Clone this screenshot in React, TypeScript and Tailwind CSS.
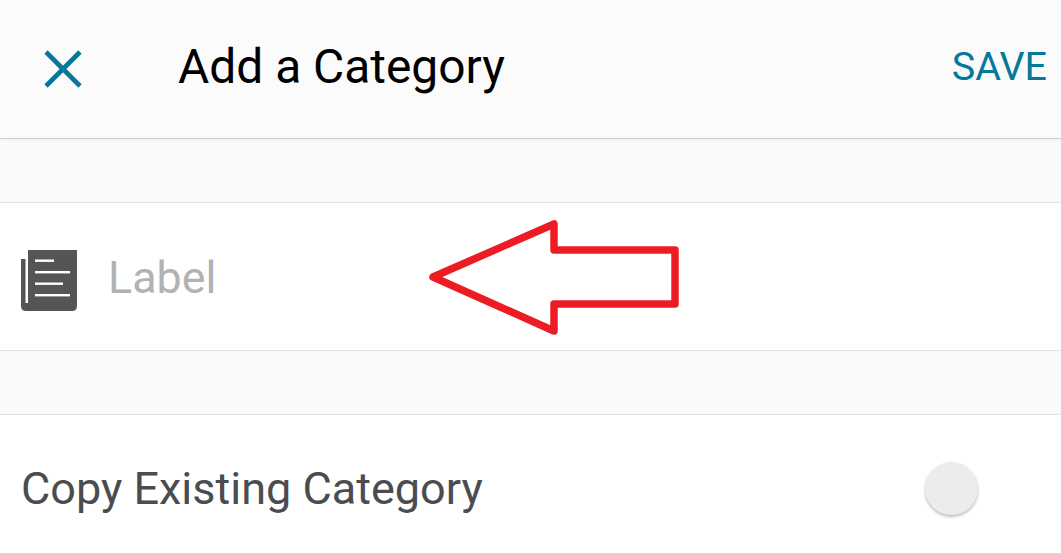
import React from 'react';

const font = { fontFamily: 'Roboto, sans-serif' };

const CloseIcon = () => (
  <svg width="38" height="38" viewBox="0 0 38 38" className="shrink-0">
    <path d="M2 2L36 36M36 2L2 36" stroke="#05799b" strokeWidth="4.6" fill="none" />
  </svg>
);

const BookIcon = () => (
  <svg width="56" height="61" viewBox="0 0 56 61" className="shrink-0 mt-[8px]">
    <path d="M7 0H56V56Q56 61 51 61H5Q0 61 0 56V9H4.5V53H7Z" fill="#555555" />
    <rect x="14" y="9.5" width="19" height="2.4" fill="#fff" />
    <rect x="14" y="21" width="35" height="2.4" fill="#fff" />
    <rect x="14" y="32.5" width="28" height="2.4" fill="#fff" />
    <rect x="14" y="44" width="35" height="2.4" fill="#fff" />
  </svg>
);

const Arrow = () => (
  <svg width="262" height="124" viewBox="0 0 262 124" className="absolute left-[426px] top-[215px]">
    <path
      d="M7 62L128 9V35H249V89H128V116Z"
      fill="none"
      stroke="#ed1c24"
      strokeWidth="7.5"
      strokeLinejoin="round"
    />
  </svg>
);

export default function App() {
  return (
    <div className="relative w-[1061px] h-[553px] overflow-hidden bg-[#fafafa]" style={font}>
      <header className="h-[139px] flex items-center bg-[#fbfbfb] border-b border-[#cfcfcf] shadow-[0_1px_3px_rgba(0,0,0,0.06)] pl-[44px] pr-[14px]">
        <CloseIcon />
        <h1 className="ml-[96px] text-[47.9px] leading-none text-black pb-[3px]">Add a Category</h1>
        <button className="ml-auto text-[39.5px] leading-none text-[#05799b] pb-[5px]">SAVE</button>
      </header>

      <div className="mt-[63px] h-[149px] flex items-center bg-white border-y border-[#e2e2e2] pl-[21px]">
        <BookIcon />
        <span className="ml-[31px] mt-[3px] text-[44.8px] leading-none text-[#b0b2b4]">Label</span>
      </div>

      <div className="mt-[63px] h-[139px] flex items-start bg-white border-t border-[#e2e2e2] pl-[21px] pr-[83px]">
        <span className="mt-[51px] text-[45px] leading-none text-[#4a4c50]">Copy Existing Category</span>
        <span className="ml-auto mt-[47px] w-[53px] h-[53px] rounded-full bg-[#ececec] shadow-[0_2px_3px_rgba(0,0,0,0.25)]" />
      </div>

      <Arrow />
    </div>
  );
}
